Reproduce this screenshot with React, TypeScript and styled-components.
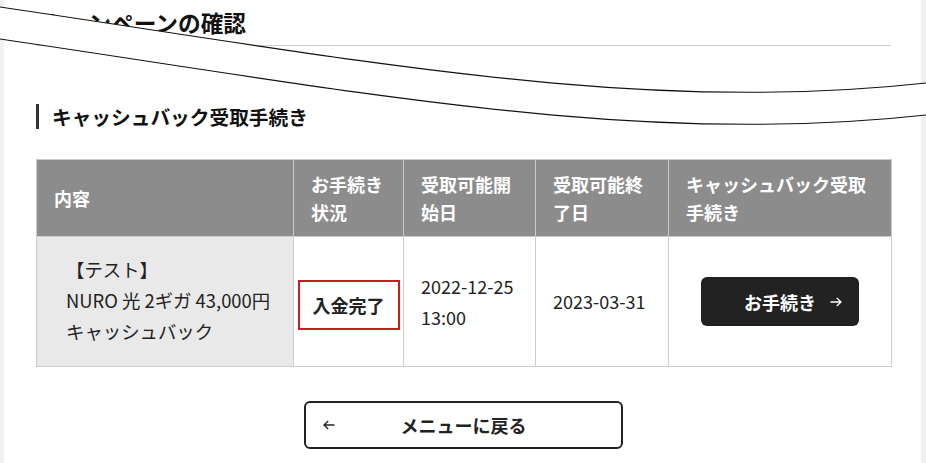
import styled, { createGlobalStyle } from "styled-components";

const GlobalStyle = createGlobalStyle`
  html, body {
    margin: 0;
    padding: 0;
    background: #f0f0f0;
  }
  body {
    font-family: "Noto Sans CJK JP", "Noto Sans", sans-serif;
    color: #222;
  }
`;

// テーブルのデータ
const rows = [
  {
    content: ["【テスト】", "NURO 光 2ギガ 43,000円", "キャッシュバック"],
    status: "入金完了",
    start: ["2022-12-25", "13:00"],
    end: "2023-03-31",
  },
];

const columns = [
  { label: "内容", width: 257 },
  { label: "お手続き状況", width: 110 },
  { label: "受取可能開始日", width: 132 },
  { label: "受取可能終了日", width: 133 },
  { label: "キャッシュバック受取手続き", width: 223 },
];

function ArrowIcon({ $dir }: { $dir: "left" | "right" }) {
  return (
    <svg width="12" height="10" viewBox="0 0 12 10" fill="none">
      {$dir === "right" ? (
        <path d="M0.5 5h10.5M6.8 1l4.2 4-4.2 4" stroke="currentColor" strokeWidth="1.3" />
      ) : (
        <path d="M11.5 5H1M5.2 1L1 5l4.2 4" stroke="currentColor" strokeWidth="1.3" />
      )}
    </svg>
  );
}

function TornEdge() {
  return (
    <Tear width="926" height="160" viewBox="0 0 926 160">
      <path
        d="M0 7C360 60 640 115 926 83L926 115C640 147 360 92 0 39Z"
        fill="#fff"
      />
      <path d="M0 7C360 60 640 115 926 83" stroke="#111" strokeWidth="1.2" fill="none" />
      <path d="M0 39C360 92 640 147 926 115" stroke="#111" strokeWidth="1.2" fill="none" />
    </Tear>
  );
}

export default function App() {
  return (
    <Page>
      <GlobalStyle />
      <Card>
        <PageTitle>キャンペーンの確認</PageTitle>
        <SectionTitle>キャッシュバック受取手続き</SectionTitle>

        <Table>
          <colgroup>
            {columns.map((col) => (
              <col key={col.label} style={{ width: col.width }} />
            ))}
          </colgroup>
          <thead>
            <tr>
              {columns.map((col) => (
                <Th key={col.label}>{col.label}</Th>
              ))}
            </tr>
          </thead>
          <tbody>
            {rows.map((row) => (
              <tr key={row.end}>
                <ContentCell>
                  {row.content.map((line) => (
                    <div key={line}>{line}</div>
                  ))}
                </ContentCell>
                <Td $center>
                  <StatusBadge>{row.status}</StatusBadge>
                </Td>
                <Td>
                  {row.start.map((line) => (
                    <div key={line}>{line}</div>
                  ))}
                </Td>
                <Td>{row.end}</Td>
                <Td $center>
                  <ProcedureButton type="button">
                    お手続き
                    <ButtonArrow $side="right">
                      <ArrowIcon $dir="right" />
                    </ButtonArrow>
                  </ProcedureButton>
                </Td>
              </tr>
            ))}
          </tbody>
        </Table>

        <Footer>
          <BackButton type="button">
            <ButtonArrow $side="left">
              <ArrowIcon $dir="left" />
            </ButtonArrow>
            メニューに戻る
          </BackButton>
        </Footer>
      </Card>
      <TornEdge />
    </Page>
  );
}

const Page = styled.div`
  position: relative;
  min-height: 100vh;
  overflow: hidden;
`;

const Tear = styled.svg`
  position: absolute;
  top: 0;
  left: 0;
  pointer-events: none;
`;

const Card = styled.main`
  background: #fff;
  margin: 0 5px 0 4px;
  min-height: 100vh;
  padding: 7px 30px 40px 32px;
  box-sizing: border-box;
`;

const PageTitle = styled.h1`
  margin: 0;
  padding: 0 0 6px 7px;
  font-size: 22.7px;
  line-height: 32px;
  font-weight: 700;
  color: #111;
  border-bottom: 1px solid #ccc;
`;

const SectionTitle = styled.h2`
  margin: 58px 0 30px;
  padding-left: 13px;
  border-left: 3px solid #333;
  font-size: 19.7px;
  line-height: 25px;
  font-weight: 700;
  color: #111;
`;

const Table = styled.table`
  width: 100%;
  table-layout: fixed;
  border-collapse: collapse;
  border: 1px solid #ccc;
`;

const Th = styled.th`
  background: #8c8c8c;
  color: #fff;
  font-size: 18px;
  font-weight: 700;
  line-height: 28px;
  text-align: left;
  padding: 10px 17px;
  border: 1px solid #ccc;
`;

interface TdProps {
  $center?: boolean;
}

const Td = styled.td<TdProps>`
  font-size: 18px;
  line-height: 31px;
  border: 1px solid #ccc;
  vertical-align: middle;
  text-align: ${({ $center }) => ($center ? "center" : "left")};
  padding: ${({ $center }) => ($center ? "0" : "0 17px")};
`;

const ContentCell = styled.td`
  background: #e9e9e9;
  font-size: 18.4px;
  line-height: 31px;
  padding: 17px 10px 19px 29px;
  border: 1px solid #ccc;
  vertical-align: middle;
`;

const StatusBadge = styled.span`
  display: inline-block;
  margin-top: 6px;
  padding: 9px 13px;
  border: 2px solid #c81a1f;
  font-size: 18px;
  line-height: 28px;
  font-weight: 700;
  color: #222;
  white-space: nowrap;
`;

const ProcedureButton = styled.button`
  position: relative;
  width: 158px;
  height: 49px;
  border: none;
  border-radius: 6px;
  background: #222;
  color: #fff;
  font-family: inherit;
  font-size: 18px;
  font-weight: 700;
  cursor: pointer;
`;

interface ButtonArrowProps {
  $side: "left" | "right";
}

const ButtonArrow = styled.span<ButtonArrowProps>`
  position: absolute;
  top: 50%;
  ${({ $side }) => ($side === "right" ? "right: 17px;" : "left: 17px;")}
  display: flex;
  transform: translateY(-50%);
`;

const Footer = styled.div`
  display: flex;
  justify-content: center;
  margin-top: 34px;
`;

const BackButton = styled.button`
  position: relative;
  width: 319px;
  height: 48px;
  border: 2px solid #222;
  border-radius: 6px;
  background: #fff;
  color: #222;
  font-family: inherit;
  font-size: 18px;
  font-weight: 700;
  cursor: pointer;
`;
